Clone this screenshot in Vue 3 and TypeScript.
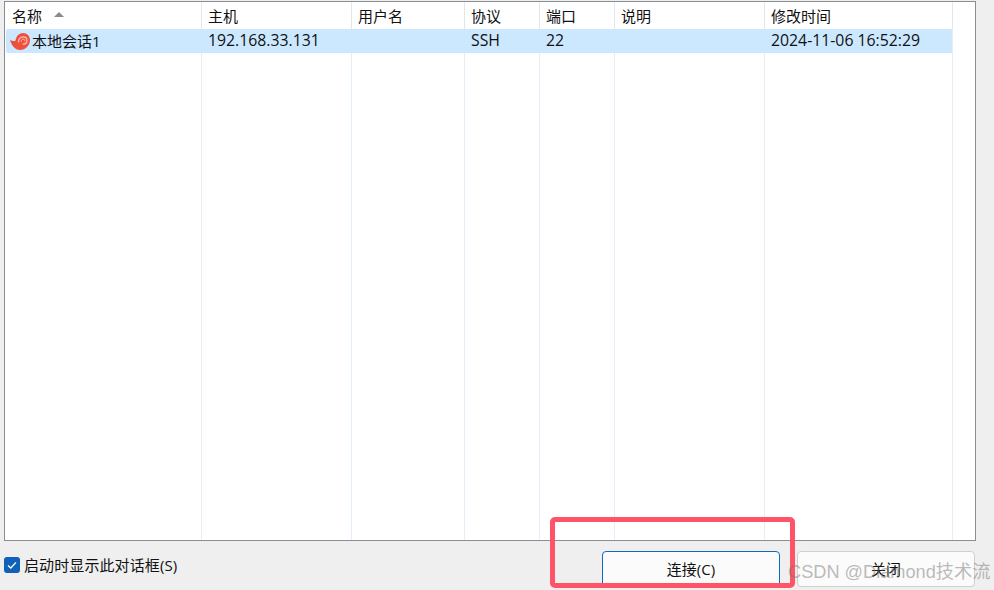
<script setup lang="ts">
interface Col { title: string; width: number; value: string }
const cols: Col[] = [
  { title: '名称', width: 197, value: '本地会话1' },
  { title: '主机', width: 150, value: '192.168.33.131' },
  { title: '用户名', width: 113, value: '' },
  { title: '协议', width: 75, value: 'SSH' },
  { title: '端口', width: 75, value: '22' },
  { title: '说明', width: 150, value: '' },
  { title: '修改时间', width: 188, value: '2024-11-06 16:52:29' },
]
</script>

<template>
  <div class="page">
    <div class="frame">
      <div class="columns">
        <div v-for="(c, i) in cols" :key="c.title" class="col" :style="{ width: c.width + 'px' }">
          <div class="head">
            <span>{{ c.title }}</span>
            <svg v-if="i === 0" class="sort" width="10" height="5" viewBox="0 0 10 5"><path d="M0 5 L5 0 L10 5 Z" fill="#8a8a8a" /></svg>
          </div>
          <div class="cell" :class="{ first: i === 0, last: i === cols.length - 1 }">
            <svg v-if="i === 0" class="snail" width="20" height="17" viewBox="0 0 20 17">
              <path d="M0 7 C2.5 8.2 4.6 8.2 5.6 7.4 C6 3 9.5 0 13.2 0 C17 0 20 3 20 7 C20 12.5 15.5 17 10 17 C5 17 1.6 12.5 0 7 Z" fill="#ee5040" />
              <path d="M8.6 9 C8.2 6 10.2 3.8 13 3.8 C15.3 3.8 17 5.5 17 7.6 C17 9.8 15.2 11.2 13.2 11.2" fill="none" stroke="#fbc4b6" stroke-width="1.2" stroke-linecap="round" />
              <path d="M11.2 8.2 C11.2 7 12.2 6.2 13.2 6.2 C14.2 6.2 14.9 7 14.8 7.9" fill="none" stroke="#fbc4b6" stroke-width="1" stroke-linecap="round" />
            </svg>
            <span :class="{ latin: i !== 0 }">{{ c.value }}</span>
          </div>
        </div>
      </div>
    </div>

    <div class="footer">
      <label class="check">
        <span class="box">
          <svg width="16" height="16" viewBox="0 0 16 16"><path d="M4 8.4 L6.8 11 L12 5.4" fill="none" stroke="#fff" stroke-width="1.3" /></svg>
        </span>
        <span class="check-label">启动时显示此对话框(S)</span>
      </label>
      <div class="buttons">
        <button class="btn primary">连接(C)</button>
        <button class="btn">关闭</button>
      </div>
    </div>

    <div class="marker"></div>
    <div class="watermark">CSDN @Diamond技术流</div>
  </div>
</template>

<style>
html, body { margin: 0; padding: 0; background: #efefef; }
</style>

<style scoped>
.page {
  position: relative;
  width: 994px;
  height: 590px;
  overflow: hidden;
  background: #efefef;
  font-family: "Open Sans", "Noto Sans CJK SC", sans-serif;
  font-size: 15px;
  color: #111;
  padding: 1px 18px 0 4px;
  box-sizing: border-box;
}
.frame {
  height: 540px;
  box-sizing: border-box;
  border: 1px solid #8a8d92;
  background: #fff;
  overflow: hidden;
}
.columns { display: flex; height: 100%; }
.col {
  flex: none;
  box-sizing: border-box;
  border-right: 1px solid #e4eef8;
  height: 100%;
}
.head {
  height: 25px;
  padding: 0 6px 2px;
  margin-top: 2px;
  display: flex;
  align-items: center;
  box-sizing: border-box;
  white-space: nowrap;
  background: #fff;
  margin-right: -1px;
  border-right: 1px solid #e5e5e5;
}
.col:first-child .head { padding-left: 7px; }
.sort { margin-left: 12px; margin-top: -3px; }
.cell {
  height: 24px;
  margin-right: -1px;
  padding: 0 6px 2px;
  box-sizing: border-box;
  display: flex;
  align-items: center;
  background: #cce8ff;
  white-space: nowrap;
}
.cell.first { margin-left: 1px; padding-left: 4px; border-radius: 2px 0 0 2px; }
.cell.last { margin-right: 0; }
.latin { font-size: 15.8px; }
.snail { margin-right: 2px; margin-top: 2px; flex: none; }
.footer {
  display: flex;
  align-items: flex-start;
  justify-content: space-between;
  padding-top: 10px;
}
.check { display: flex; align-items: center; gap: 4px; height: 36px; margin-top: -5px; }
.check-label { letter-spacing: 0.1px; }
.box {
  width: 16px;
  height: 16px;
  margin-top: 2px;
  border-radius: 3px;
  background: #0f62b8;
  display: flex;
}
.buttons { display: flex; gap: 17px; margin-right: 1px; }
.btn {
  width: 178px;
  height: 36px;
  box-sizing: border-box;
  border: 1px solid #d0d0d0;
  border-radius: 4px;
  background: #fbfbfb;
  font: inherit;
  color: #111;
  padding: 0 0 2px;
}
.btn.primary { border-color: #0f6cbd; }
.marker {
  position: absolute;
  left: 550px;
  top: 517px;
  width: 245px;
  height: 71px;
  box-sizing: border-box;
  border: 5px solid #ff5468;
  border-radius: 5px;
}
.watermark {
  position: absolute;
  left: 788px;
  top: 559px;
  font-family: "Liberation Sans", "Noto Sans CJK SC", sans-serif;
  font-size: 18.2px;
  line-height: 26px;
  color: rgba(120, 120, 120, 0.5);
  white-space: nowrap;
}
</style>
